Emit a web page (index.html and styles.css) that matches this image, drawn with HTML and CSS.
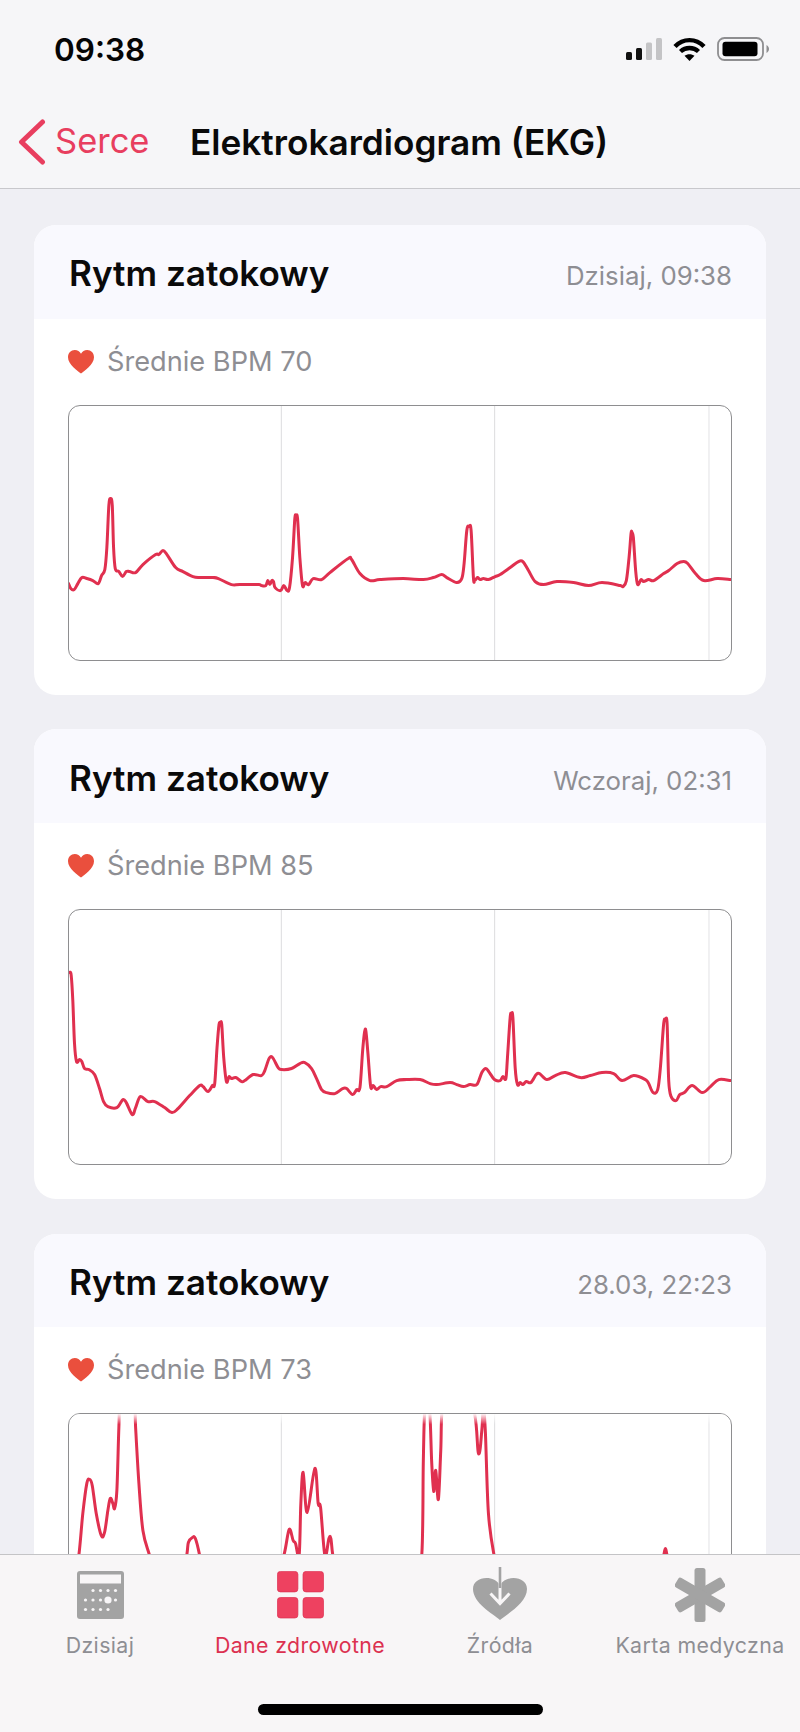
FILE: index.html
```html
<!DOCTYPE html>
<html lang="pl">
<head>
    <meta charset="UTF-8">
    <meta name="viewport" content="width=device-width, initial-scale=1.0">
    <title>Elektrokardiogram (EKG)</title>
    <link rel="stylesheet" href="styles.css">
</head>
<body>
    <div class="app">
        <header class="top">
            <div class="status">
                <span class="time">09:38</span>
                <div class="status-icons">
                    <svg class="signal" width="36" height="22" viewBox="0 0 36 22">
                        <rect x="0" y="14" width="6" height="8" rx="1.500" fill="#111"/>
                        <rect x="10" y="10" width="6" height="12" rx="1.500" fill="#111"/>
                        <rect x="20" y="4.500" width="6" height="17.500" rx="1.500" fill="#c4c4c6"/>
                        <rect x="30" y="0" width="6" height="22" rx="1.500" fill="#c4c4c6"/>
                    </svg>
                    <svg class="wifi" width="33" height="24" viewBox="0 0 33 24" fill="none" stroke="#000" stroke-width="4.400">
                        <path d="M2 9.500C10 1 23 1 31 9.500"/>
                        <path d="M7.500 14.500C12.500 9.800 20.500 9.800 25.500 14.500"/>
                        <path d="M16.500 24L11.500 18.800C14.200 16.700 18.800 16.700 21.500 18.800Z" fill="#000" stroke="none"/>
                    </svg>
                    <svg class="battery" width="52" height="24" viewBox="0 0 52 24">
                        <rect x="1" y="1" width="45" height="22" rx="6.500" fill="none" stroke="#8e8e90" stroke-width="1.800"/>
                        <rect x="5.500" y="4.800" width="35" height="14.500" rx="3" fill="#000"/>
                        <path d="M49.500 8C51 8.800 52 10.300 52 12C52 13.700 51 15.200 49.500 16Z" fill="#8e8e90"/>
                    </svg>
                </div>
            </div>
            <nav class="nav">
                <svg class="chevron" width="28" height="46" viewBox="0 0 28 46" fill="none" stroke="#e83e5f" stroke-width="5" stroke-linecap="round" stroke-linejoin="round">
                    <path d="M24.500 3L3.500 23L24.500 43"/>
                </svg>
                <span class="back">Serce</span>
                <h1 class="title">Elektrokardiogram (EKG)</h1>
            </nav>
        </header>

        <main class="content">
            <section class="card">
                <div class="card-head">
                    <h2>Rytm zatokowy</h2>
                    <span class="date">Dzisiaj, 09:38</span>
                </div>
                <div class="card-body">
                    <div class="bpm">
                        <svg class="heart" width="26" height="24" viewBox="0 0 26 24"><path d="M13 23.500C10 21 0 14.500 0 7.200C0 3 3 0 6.800 0C9.500 0 11.800 1.500 13 3.800C14.200 1.500 16.500 0 19.200 0C23 0 26 3 26 7.200C26 14.500 16 21 13 23.500Z" fill="#ea4f3d"/></svg>
                        <span>Średnie BPM 70</span>
                    </div>
                    <div class="chart">
                        <svg class="ekg" viewBox="0.5 1 661 253">
                            <path class="grid" d="M212.500 0V256M425.500 0V256"/>
                            <path class="grid-last" d="M639.500 0V256"/>
                            <path class="trace" data-trace="0"/>
                        </svg>
                    </div>
                </div>
            </section>

            <section class="card">
                <div class="card-head">
                    <h2>Rytm zatokowy</h2>
                    <span class="date">Wczoraj, 02:31</span>
                </div>
                <div class="card-body">
                    <div class="bpm">
                        <svg class="heart" width="26" height="24" viewBox="0 0 26 24"><path d="M13 23.500C10 21 0 14.500 0 7.200C0 3 3 0 6.800 0C9.500 0 11.800 1.500 13 3.800C14.200 1.500 16.500 0 19.200 0C23 0 26 3 26 7.200C26 14.500 16 21 13 23.500Z" fill="#ea4f3d"/></svg>
                        <span>Średnie BPM 85</span>
                    </div>
                    <div class="chart">
                        <svg class="ekg" viewBox="0.5 1 661 253">
                            <path class="grid" d="M212.500 0V256M425.500 0V256"/>
                            <path class="grid-last" d="M639.500 0V256"/>
                            <path class="trace" data-trace="1"/>
                        </svg>
                    </div>
                </div>
            </section>

            <section class="card">
                <div class="card-head">
                    <h2>Rytm zatokowy</h2>
                    <span class="date">28.03, 22:23</span>
                </div>
                <div class="card-body">
                    <div class="bpm">
                        <svg class="heart" width="26" height="24" viewBox="0 0 26 24"><path d="M13 23.500C10 21 0 14.500 0 7.200C0 3 3 0 6.800 0C9.500 0 11.800 1.500 13 3.800C14.200 1.500 16.500 0 19.200 0C23 0 26 3 26 7.200C26 14.500 16 21 13 23.500Z" fill="#ea4f3d"/></svg>
                        <span>Średnie BPM 73</span>
                    </div>
                    <div class="chart">
                        <svg class="ekg" viewBox="0.5 1 661 253">
                            <defs>
                                <linearGradient id="fade" x1="0" y1="0" x2="0" y2="1">
                                    <stop offset="0" stop-color="#fff"/>
                                    <stop offset="1" stop-color="#fff" stop-opacity="0"/>
                                </linearGradient>
                            </defs>
                            <path class="grid" d="M212.500 0V256M425.500 0V256"/>
                            <path class="grid-last" d="M639.500 0V256"/>
                            <path class="trace" data-trace="2"/>
                            <rect x="0" y="0" width="663" height="11" fill="url(#fade)"/>
                        </svg>
                    </div>
                </div>
            </section>
        </main>

        <footer class="tabbar">
            <div class="tabs">
                <div class="tab">
                    <div class="tab-icon">
                        <svg width="47" height="48" viewBox="0 0 47 48">
                            <rect width="47" height="48" rx="3" fill="#a3a3a3"/>
                            <rect x="3" y="3.500" width="41" height="9" fill="#f8f6f7"/>
                            <g fill="#f8f6f7">
                                <circle cx="16" cy="19.500" r="1.600"/><circle cx="23.500" cy="19.500" r="1.600"/><circle cx="31" cy="19.500" r="1.600"/><circle cx="38.500" cy="19.500" r="1.600"/>
                                <circle cx="8.500" cy="29" r="1.600"/><circle cx="16" cy="29" r="1.600"/><circle cx="23.500" cy="29" r="1.600"/><circle cx="31" cy="29" r="3.600"/><circle cx="38.500" cy="29" r="1.600"/>
                                <circle cx="8.500" cy="38.500" r="1.600"/><circle cx="16" cy="38.500" r="1.600"/><circle cx="23.500" cy="38.500" r="1.600"/><circle cx="31" cy="38.500" r="1.600"/>
                            </g>
                        </svg>
                    </div>
                    <span class="tab-label">Dzisiaj</span>
                </div>
                <div class="tab tab-active">
                    <div class="tab-icon">
                        <svg width="47" height="48" viewBox="0 0 47 48" fill="#ee4160" stroke="#dd2f50" stroke-width="0.700">
                            <rect x="0.400" y="0.400" width="20.500" height="20.500" rx="3"/>
                            <rect x="26" y="0.400" width="20.500" height="20.500" rx="3"/>
                            <rect x="0.400" y="26.500" width="20.500" height="20.500" rx="3"/>
                            <rect x="26" y="26.500" width="20.500" height="20.500" rx="3"/>
                        </svg>
                    </div>
                    <span class="tab-label">Dane zdrowotne</span>
                </div>
                <div class="tab">
                    <div class="tab-icon">
                        <svg class="icon-sources" width="54" height="54" viewBox="0 0 54 54">
                            <path d="M27 53C20 47 0 36 0 22C0 15 6 11 13.500 11C19 11 24 13.500 27 18C30 13.500 35 11 40.500 11C48 11 54 15 54 22C54 36 34 47 27 53Z" fill="#a3a3a3"/>
                            <path d="M27 12V36M17.500 26.500L27 36.500L36.500 26.500" fill="none" stroke="#f8f6f7" stroke-width="3"/>
                            <path d="M27 0V21" stroke="#a3a3a3" stroke-width="2.600"/>
                        </svg>
                    </div>
                    <span class="tab-label">Źródła</span>
                </div>
                <div class="tab">
                    <div class="tab-icon">
                        <svg width="50" height="54" viewBox="0 0 50 54" fill="#a3a3a3">
                            <rect x="19.500" y="0" width="11" height="54" rx="2.500"/>
                            <rect x="19.500" y="0" width="11" height="54" rx="2.500" transform="rotate(60 25 27)"/>
                            <rect x="19.500" y="0" width="11" height="54" rx="2.500" transform="rotate(-60 25 27)"/>
                        </svg>
                    </div>
                    <span class="tab-label">Karta medyczna</span>
                </div>
            </div>
            <div class="home-bar"></div>
        </footer>
    </div>
    <script src="script.js"></script>
</body>
</html>
```

FILE: styles.css
```css
* {
    box-sizing: border-box;
}

html, body {
    margin: 0;
    padding: 0;
}

body {
    font-family: 'Inter', 'Liberation Sans', sans-serif;
    background: #efeff4;
    color: #000;
}

.app {
    width: 800px;
    height: 1732px;
    display: flex;
    flex-direction: column;
    overflow: hidden;
}

/* status bar + nav */
.top {
    height: 189px;
    flex-shrink: 0;
    background: #f6f6f8;
    border-bottom: 1px solid #c8c8cc;
}

.status {
    height: 97px;
    display: flex;
    justify-content: space-between;
    align-items: center;
    padding: 0 31px 0 54px;
}

.time {
    font-size: 31.500px;
    font-weight: 600;
    color: #050505;
    margin-top: 2px;
}

.status-icons {
    display: flex;
    align-items: center;
}

.signal {
    margin-right: 11px;
}

.wifi {
    margin-right: 11px;
}

.nav {
    height: 90px;
    display: flex;
    align-items: center;
    padding-left: 18px;
}

.chevron {
    margin-right: 9px;
}

.back {
    font-size: 34.500px;
    color: #e83e5f;
    width: 135px;
    margin-top: -4px;
}

.title {
    margin: 0;
    font-size: 35.200px;
    font-weight: 600;
    color: #0a0a0a;
}

/* cards */
.content {
    flex: 1;
    overflow: hidden;
    padding: 36px 34px 0;
}

.card {
    background: #fff;
    border-radius: 22px;
    overflow: hidden;
    margin-bottom: 34.300px;
    height: 470px;
}

.card-head {
    height: 93.500px;
    background: #f9f9fe;
    display: flex;
    justify-content: space-between;
    align-items: center;
    padding: 0 34px 0 35px;
}

.card-head h2 {
    margin: 0 0 -3px;
    font-size: 35.100px;
    font-weight: 600;
    color: #0a0a0a;
}

.date {
    font-size: 25.800px;
    color: #8e8e93;
    margin-top: 8px;
}

.card-body {
    padding: 0 34px;
}

.bpm {
    height: 86.200px;
    display: flex;
    align-items: center;
    font-size: 27.200px;
    color: #8e8e93;
}

.bpm span {
    margin-top: -1px;
}

.heart {
    margin-right: 13px;
}

.chart {
    height: 256px;
    border: 1.500px solid #8e8e90;
    border-radius: 12px;
    overflow: hidden;
}

.ekg {
    display: block;
    width: 100%;
    height: 100%;
}

.grid {
    stroke: #dcdcde;
    stroke-width: 1;
    fill: none;
}

.grid-last {
    stroke: #ececee;
    stroke-width: 1.500;
    fill: none;
}

.trace {
    fill: none;
    stroke: #e0304f;
    stroke-width: 3;
    stroke-linejoin: round;
    stroke-linecap: round;
}

/* tab bar */
.tabbar {
    height: 178px;
    flex-shrink: 0;
    background: #f8f6f7;
    border-top: 1px solid #c4c4c6;
    position: relative;
}

.tabs {
    display: grid;
    grid-template-columns: repeat(4, 1fr);
}

.tab {
    height: 110px;
    display: flex;
    flex-direction: column;
    align-items: center;
}

.tab-icon {
    height: 60px;
    margin-top: 10px;
    display: flex;
    align-items: center;
    justify-content: center;
}

.icon-sources {
    margin-bottom: 3px;
}

.tab-label {
    font-size: 21.300px;
    color: #8e8e93;
    white-space: nowrap;
    letter-spacing: 0.400px;
    margin-top: 7px;
}

.tab-active .tab-label {
    color: #dc3150;
}

.home-bar {
    position: absolute;
    left: 258px;
    top: 149px;
    width: 285px;
    height: 11px;
    border-radius: 6px;
    background: #000;
}
```

FILE: script.js
```js
// punkty wykresow EKG: x, y, x, y ...
var traces = [
    [0,178, 2.3,183, 5.7,184, 9.3,178, 13.3,172, 18.3,173, 24.3,175, 29.7,178, 33,170, 36.3,164, 38.3,142, 40.3,100, 42,93, 43.7,100, 45,142, 46.7,163, 50.3,166, 54,171, 57.7,166, 61,166, 67,167, 74.3,159, 87,149, 90.3,149, 94.3,145, 98.3,149, 107,162, 114.3,166, 124.3,171, 131,172, 144.3,172, 149.7,173, 162.7,179, 171,179, 190.3,179, 192.7,180, 197,180, 199,175, 201,179, 203,175, 204.7,176, 206.3,182, 211.7,185, 215,180, 218.3,185, 220.7,182, 223.7,152, 226,113, 227.3,111, 228.7,113, 231,152, 233.7,180, 236.3,177, 239.7,179, 244.3,173, 252.7,174, 261,167, 279.3,153, 282.7,154, 291,168, 301,175, 311,174, 334.3,173, 354.3,174, 364.3,172, 372.7,169, 377.7,172, 387.7,177, 392.7,173, 395,158, 397.7,125, 400,121, 402,125, 404.3,172, 405.7,175, 408.3,172, 411,174, 414.3,173, 419.3,174, 426,171, 431,169, 441,162, 449.3,156, 453.7,156, 459.3,165, 466,176, 474.3,179, 487.7,176, 504.3,177, 519.3,180, 532.7,177, 551,180, 553.7,181, 557,175, 559.7,152, 561.7,128, 562.7,127, 564,132, 566.3,165, 568.3,179, 571.7,174, 574.3,176, 579.3,174, 584.3,175, 594.3,168, 599.3,165, 607.7,158, 614.3,156, 618.3,158, 626,168, 634.3,175, 647.7,173, 661,174],
    [1.3,63, 2.7,66, 4.3,91, 6,134, 8,152, 11,150, 13.3,152, 16,159, 20.3,160, 26,165, 31,179, 35,192, 39.3,197, 48.3,198, 54.3,190, 57.7,193, 63.7,205, 67,198, 71.7,187, 79.3,192, 86,192, 96,198, 103.3,203, 109.3,199, 121,186, 131,176, 134.3,177, 139.3,182, 143.7,176, 146,174, 148.3,138, 150.3,115, 151.7,114, 153,115, 155,148, 157.7,172, 160.3,167, 162.7,169, 167,168, 173,172, 176,171, 184.3,165, 192.7,166, 196,161, 200.3,149, 203.7,148, 209.3,158, 212.7,160, 222.7,159, 231,154, 236,153, 242.7,159, 247.7,169, 252.7,180, 257.7,183, 266,184, 273.7,179, 277.7,179, 283.7,185, 287.7,180, 291,178, 293.7,141, 295.7,122, 297,122, 299,144, 301.7,177, 304.3,176, 307.7,180, 311.7,177, 317.7,177, 327.7,171, 337.7,170, 351,170, 361,174, 367.7,175, 381,173, 387.7,175, 394.3,177, 401,175, 407.7,175, 412.7,163, 416.7,159, 420.3,163, 425.3,170, 431,171, 433.7,167, 436.7,169, 438.3,148, 441,108, 442.3,105, 443.7,108, 446,158, 448.3,175, 451,173, 453.7,175, 457,172, 461.7,173, 467,165, 470.3,164, 477.7,170, 486,166, 496,163, 511,168, 521,166, 532.7,163, 544.3,164, 552.7,171, 564.3,166, 576,170, 579.3,174, 583.7,183, 588.3,180, 591,158, 594.3,114, 596,111, 597.7,114, 599.3,171, 601.7,187, 606.7,191, 610.3,185, 615,183, 622.7,176, 632.7,183, 641,177, 649.3,170, 661,171],
    [5,170, 10.3,142, 14.3,100, 18.3,70, 21,66, 23.7,72, 27.7,100, 32.7,122, 36,119, 39.3,97, 41.7,85, 44.3,90, 46,95, 48.3,77, 50.3,14, 51.7,-8, 66,-8, 67,14, 70.3,70, 74.3,117, 81,142, 90,170, 112,170, 118,142, 119.7,129, 123.7,124, 126.7,125, 131,142, 136,170, 205,170, 215,142, 220.3,116, 224.3,127, 226.7,130, 230.3,142, 232,90, 234.3,59, 238.3,99, 246,55, 249.3,90, 251.7,94, 256,142, 260,125, 262,125, 264,142, 270,170, 345,170, 352.7,142, 354.3,47, 356,-8, 360.3,-8, 362.7,50, 364.7,78, 366.7,57, 369.3,86, 371.7,37, 373.7,-8, 402.7,-8, 409.3,40, 412.7,17, 414.3,-8, 416.3,20, 419.3,100, 425,142, 432,170, 588,170, 594.3,142, 596,135, 597.7,142, 603,170]
];

// gladka linia przez punkty (catmull-rom na bezier)
function smoothPath(d) {
    var pts = [];
    for (var i = 0; i < d.length; i += 2) {
        pts.push({ x: d[i], y: d[i + 1] });
    }

    var path = 'M' + pts[0].x + ' ' + pts[0].y;
    for (var j = 0; j < pts.length - 1; j++) {
        var p0 = pts[j - 1] || pts[j];
        var p1 = pts[j];
        var p2 = pts[j + 1];
        var p3 = pts[j + 2] || p2;

        // x kontrolny trzymamy miedzy punktami zeby linia sie nie cofala
        var c1x = Math.min(p1.x + (p2.x - p0.x) / 6, p2.x);
        var c2x = Math.max(p2.x - (p3.x - p1.x) / 6, p1.x);
        var c1y = p1.y + (p2.y - p0.y) / 6;
        var c2y = p2.y - (p3.y - p1.y) / 6;

        path += 'C' + c1x + ' ' + c1y + ' ' + c2x + ' ' + c2y + ' ' + p2.x + ' ' + p2.y;
    }
    return path;
}

document.querySelectorAll('.trace').forEach(function (el) {
    el.setAttribute('d', smoothPath(traces[el.dataset.trace]));
});
```
